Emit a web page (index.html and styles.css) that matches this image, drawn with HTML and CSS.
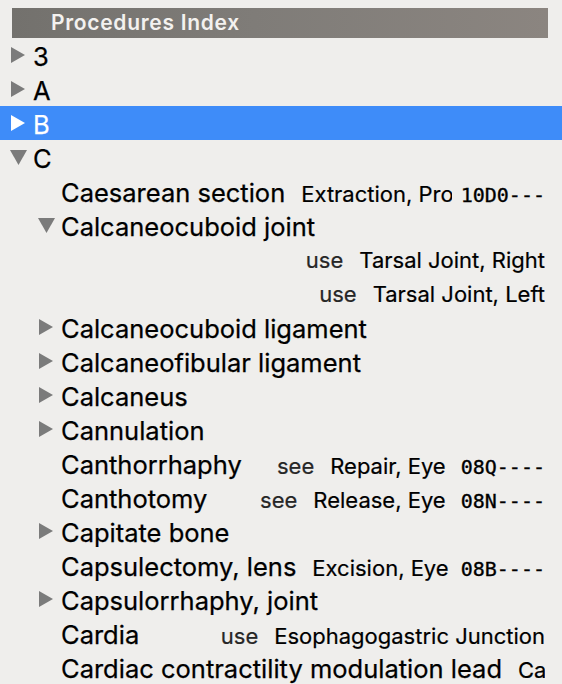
FILE: index.html
```html
<!DOCTYPE html>
<html>
<head>
<meta charset="utf-8">
<title>Procedures Index</title>
<link rel="stylesheet" href="styles.css">
</head>
<body>
<div class="panel">
  <div class="header"><span class="title">Procedures Index</span></div>
  <div class="list">
    <div class="row l0"><span class="tw"><svg class="tri r" viewBox="0 0 14 16"><polygon points="0,0 14,8 0,16"/></svg></span><span class="name">3</span></div>
    <div class="row l0"><span class="tw"><svg class="tri r" viewBox="0 0 14 16"><polygon points="0,0 14,8 0,16"/></svg></span><span class="name">A</span></div>
    <div class="row l0 selected"><span class="tw"><svg class="tri r" viewBox="0 0 14 16"><polygon points="0,0 14,8 0,16"/></svg></span><span class="name">B</span></div>
    <div class="row l0"><span class="tw"><svg class="tri d" viewBox="0 0 17 15"><polygon points="0,0 17,0 8.5,15"/></svg></span><span class="name">C</span></div>
    <div class="row l1"><span class="tw"></span><span class="name">Caesarean section</span><span class="desc hascode">Extraction, Products of Conception</span><span class="code">10D0---</span></div>
    <div class="row l1"><span class="tw"><svg class="tri d" viewBox="0 0 17 15"><polygon points="0,0 17,0 8.5,15"/></svg></span><span class="name">Calcaneocuboid joint</span></div>
    <div class="row l2"><span class="tw"></span><span class="name"></span><span class="desc"><span class="kw">use</span>Tarsal Joint, Right</span></div>
    <div class="row l2"><span class="tw"></span><span class="name"></span><span class="desc"><span class="kw">use</span>Tarsal Joint, Left</span></div>
    <div class="row l1"><span class="tw"><svg class="tri r" viewBox="0 0 14 16"><polygon points="0,0 14,8 0,16"/></svg></span><span class="name">Calcaneocuboid ligament</span></div>
    <div class="row l1"><span class="tw"><svg class="tri r" viewBox="0 0 14 16"><polygon points="0,0 14,8 0,16"/></svg></span><span class="name">Calcaneofibular ligament</span></div>
    <div class="row l1"><span class="tw"><svg class="tri r" viewBox="0 0 14 16"><polygon points="0,0 14,8 0,16"/></svg></span><span class="name">Calcaneus</span></div>
    <div class="row l1"><span class="tw"><svg class="tri r" viewBox="0 0 14 16"><polygon points="0,0 14,8 0,16"/></svg></span><span class="name">Cannulation</span></div>
    <div class="row l1"><span class="tw"></span><span class="name">Canthorrhaphy</span><span class="desc hascode"><span class="kw">see</span>Repair, Eye</span><span class="code">08Q----</span></div>
    <div class="row l1"><span class="tw"></span><span class="name">Canthotomy</span><span class="desc hascode"><span class="kw">see</span>Release, Eye</span><span class="code">08N----</span></div>
    <div class="row l1"><span class="tw"><svg class="tri r" viewBox="0 0 14 16"><polygon points="0,0 14,8 0,16"/></svg></span><span class="name">Capitate bone</span></div>
    <div class="row l1"><span class="tw"></span><span class="name">Capsulectomy, lens</span><span class="desc hascode">Excision, Eye</span><span class="code">08B----</span></div>
    <div class="row l1"><span class="tw"><svg class="tri r" viewBox="0 0 14 16"><polygon points="0,0 14,8 0,16"/></svg></span><span class="name">Capsulorrhaphy, joint</span></div>
    <div class="row l1"><span class="tw"></span><span class="name">Cardia</span><span class="desc"><span class="kw">use</span>Esophagogastric Junction</span></div>
    <div class="row l1"><span class="tw"></span><span class="name">Cardiac contractility modulation lead</span><span class="desc">Cardiac Lead in Heart and Great Vessels</span></div>
  </div>
</div>
</body>
</html>
```
FILE: styles.css
```css
html, body {
  margin: 0;
  padding: 0;
  height: 684px;
  overflow: hidden;
}
body {
  background: #efeeec;
  font-family: Inter, "Liberation Sans", sans-serif;
  color: #000;
}
.panel {
  padding-top: 8px;
}
.header {
  margin-left: 12px;
  width: 536px;
  height: 30px;
  background: linear-gradient(90deg, #73716d 0%, #7f7c78 45%, #8b8580 100%);
  padding-left: 39px;
  box-sizing: border-box;
  line-height: 30px;
}
.title {
  font-size: 21px;
  font-weight: 600;
  letter-spacing: 0.7px;
  color: #f3f1ef;
}
.list {
  display: flex;
  flex-direction: column;
}
.row {
  display: flex;
  align-items: baseline;
  height: 34px;
  box-sizing: border-box;
  padding-top: 3px;
  padding-right: 17px;
  white-space: nowrap;
  overflow: hidden;
}
.row.l0 { padding-left: 11px; }
.row.l1 { padding-left: 39px; }
.row.l2 { padding-left: 67px; }
.row.selected {
  background: #3e8cf9;
  color: #fff;
}
.tw {
  flex: none;
  width: 22px;
  height: 16px;
  align-self: center;
  margin-bottom: 3px;
  display: flex;
  align-items: center;
}
.tri {
  display: block;
  fill: #7b7b7b;
}
.tri.r { width: 14px; height: 16px; }
.tri.d { width: 17px; height: 15px; margin-left: -1px; }
.selected .tri { fill: #fff; }
.name {
  flex: none;
  font-size: 25.5px;
  line-height: 31px;
  margin-right: 16px;
  -webkit-text-stroke: 0.25px currentColor;
}
.desc {
  flex: 1 1 auto;
  min-width: 0;
  overflow: hidden;
  text-align: right;
  font-size: 22px;
  line-height: 31px;
  color: #000;
  -webkit-text-stroke: 0.2px currentColor;
}
.desc.hascode {
  padding-right: 6px;
}
.kw {
  color: #262626;
  margin-right: 16px;
}
.code {
  flex: none;
  margin-left: 9px;
  font-family: "DejaVu Sans Mono", monospace;
  font-size: 20px;
  line-height: 31px;
  color: #000;
  -webkit-text-stroke: 0.35px currentColor;
}
```
